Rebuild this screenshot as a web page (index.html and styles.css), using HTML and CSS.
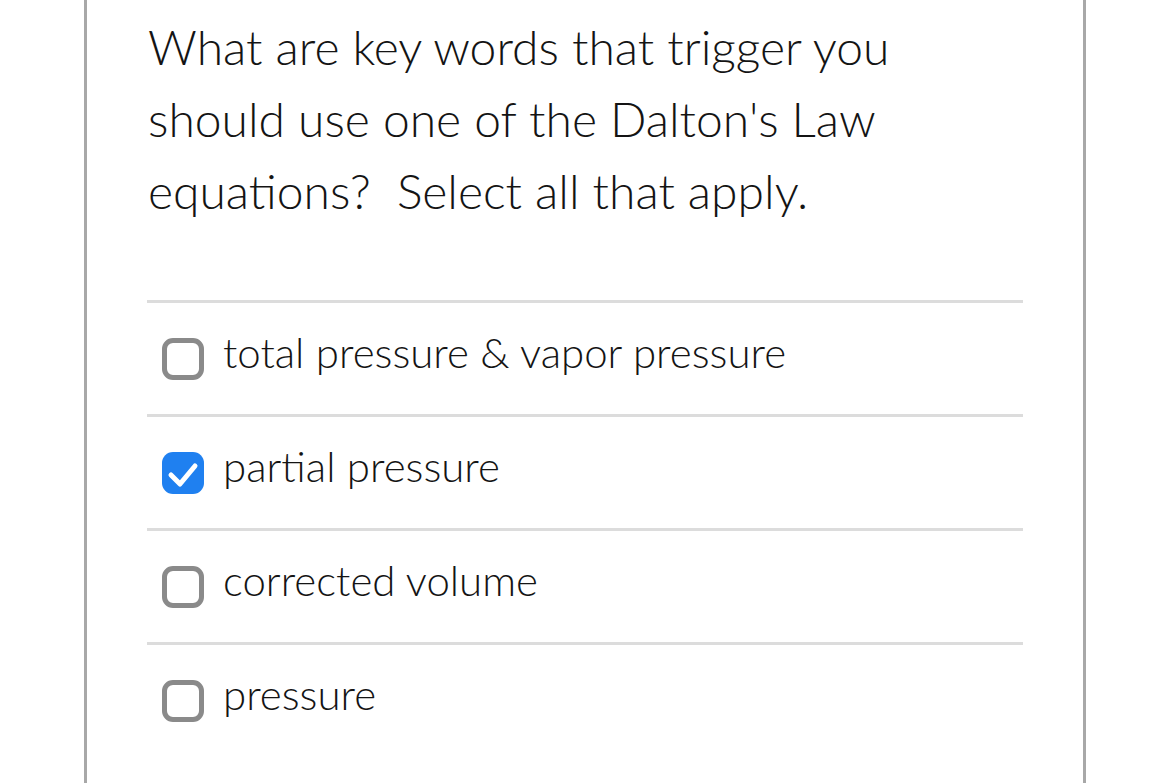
FILE: index.html
```html
<!DOCTYPE html>
<html lang="en">
<head>
<meta charset="utf-8">
<link rel="stylesheet" href="styles.css">
</head>
<body>
<div class="card">
  <p class="question">What are key words that trigger you should use one of the Dalton's Law equations?&nbsp; Select all that apply.</p>
  <ul class="options">
    <li class="option">
      <span class="box"></span>
      <span class="label">total pressure &amp; vapor pressure</span>
    </li>
    <li class="option">
      <span class="box checked">
        <svg viewBox="0 0 42 42" width="42" height="42"><path d="M9 23 L18 32 L33 14" fill="none" stroke="#fff" stroke-width="5" stroke-linecap="round" stroke-linejoin="round"/></svg>
      </span>
      <span class="label">partial pressure</span>
    </li>
    <li class="option">
      <span class="box"></span>
      <span class="label">corrected volume</span>
    </li>
    <li class="option">
      <span class="box"></span>
      <span class="label">pressure</span>
    </li>
  </ul>
</div>
</body>
</html>
```
FILE: styles.css
```css
html, body {
  margin: 0;
  padding: 0;
  background: #fff;
}
body {
  font-family: Lato, "Open Sans", sans-serif;
  color: #141414;
}
.card {
  margin-left: 84px;
  width: 875px;
  min-height: 783px;
  border-left: 3px solid #a8a8a8;
  border-right: 3px solid #a8a8a8;
  padding: 11px 60px 0 61px;
  box-sizing: content-box;
}
.question {
  margin: 0;
  font-size: 48px;
  line-height: 72px;
  font-weight: 300;
  width: 790px;
}
.options {
  list-style: none;
  margin: 73px 0 0 -1px;
  padding: 0;
  width: 876px;
}
.option {
  display: flex;
  align-items: center;
  height: 111px;
  border-top: 3px solid #dcdcdc;
  padding-left: 15px;
  gap: 19px;
}
.box {
  width: 42px;
  height: 42px;
  box-sizing: border-box;
  border: 5px solid #8a8a8a;
  border-radius: 11px;
  flex: none;
  display: flex;
}
.box.checked {
  border: none;
  background: #1f80f0;
}
.label {
  font-size: 42px;
  font-weight: 300;
  line-height: 1;
  margin-bottom: 13px;
}
```
